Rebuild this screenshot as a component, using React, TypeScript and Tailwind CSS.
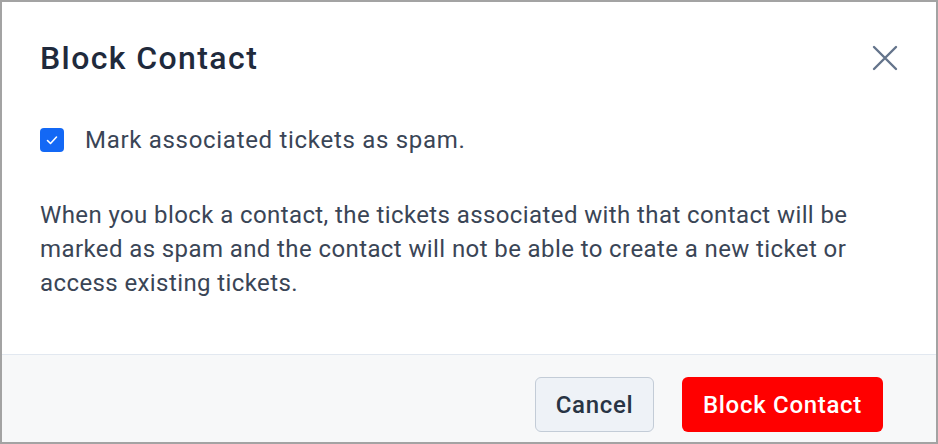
import React, { useState } from 'react';

const App: React.FC = () => {
  const [spam, setSpam] = useState(true);

  return (
    <div className="w-[938px] h-[444px] bg-white border-2 border-[#a3a3a3] flex flex-col font-['Roboto',sans-serif]">
      <div className="flex-1 px-[38px]">
        <div className="flex items-center justify-between pt-[36px]">
          <h2 className="text-[32px] leading-[40px] font-medium tracking-[1.4px] text-[#1f2a3c]">Block Contact</h2>
          <button className="mr-0 text-[#64748b]" aria-label="Close">
            <svg width="26" height="26" viewBox="0 0 26 26" fill="none" stroke="currentColor" strokeWidth="2.4" strokeLinecap="round">
              <path d="M2 2l22 22M24 2L2 24" />
            </svg>
          </button>
        </div>

        <label className="flex items-center gap-[21px] mt-[44px] cursor-pointer">
          <button
            onClick={() => setSpam(!spam)}
            className={`w-6 h-6 rounded-[4px] flex items-center justify-center ${spam ? 'bg-[#1368f5]' : 'border-2 border-[#94a3b8] bg-white'}`}
          >
            {spam && (
              <svg width="16" height="16" viewBox="0 0 16 16" fill="none" stroke="white" strokeWidth="1.6" strokeLinecap="round" strokeLinejoin="round">
                <path d="M3.5 8.5l3 3 6-6.5" />
              </svg>
            )}
          </button>
          <span className="text-[24px] tracking-[0.7px] text-[#3a4556]">Mark associated tickets as spam.</span>
        </label>

        <p className="mt-[40px] text-[24px] leading-[34px] tracking-[0.4px] text-[#3a4556]">
          When you block a contact, the tickets associated with that contact will be marked as spam and the contact will not be able to create a new ticket or access existing tickets.
        </p>
      </div>

      <div className="h-[88px] bg-[#f7f8f9] border-t border-[#e2e8f0] flex items-start justify-end gap-[28px] pt-[22px] pr-[53px]">
        <button className="w-[119px] h-[55px] rounded-[6px] border border-[#c3ccd7] bg-[#eef2f7] text-[24px] tracking-[0.7px] font-medium text-[#283444]">
          Cancel
        </button>
        <button className="w-[201px] h-[55px] rounded-[6px] bg-[#ff0000] text-[24px] tracking-[0.7px] font-medium text-white">
          Block Contact
        </button>
      </div>
    </div>
  );
};

export default App;
